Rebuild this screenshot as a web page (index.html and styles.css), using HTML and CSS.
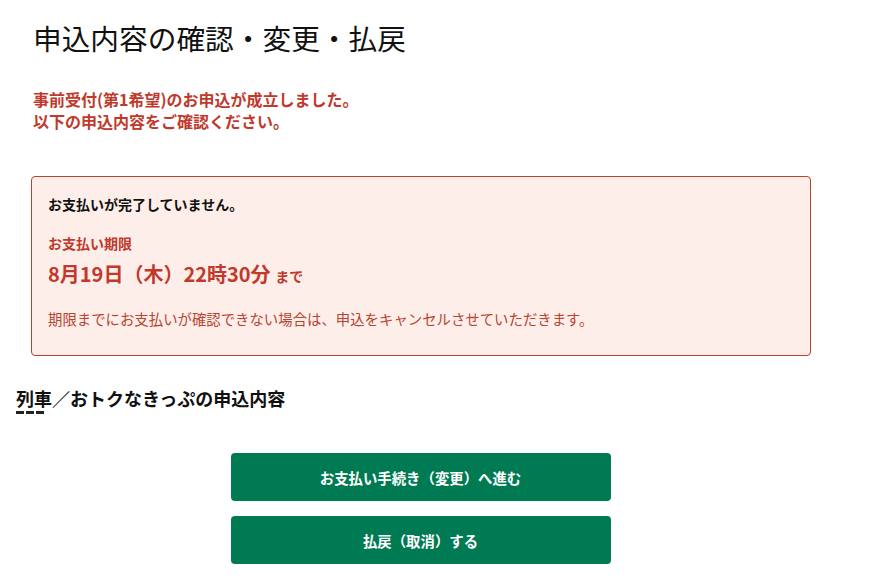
FILE: index.html
```html
<!DOCTYPE html>
<html lang="ja">
<head>
    <meta charset="UTF-8">
    <meta name="viewport" content="width=device-width, initial-scale=1.0">
    <title>申込内容の確認・変更・払戻</title>
    <link rel="stylesheet" href="styles.css">
</head>
<body>

<div class="page">
    <h1 class="page-title">申込内容の確認・変更・払戻</h1>

    <p class="lead">事前受付(第1希望)のお申込が成立しました。<br>以下の申込内容をご確認ください。</p>

    <div class="notice">
        <p class="notice-head">お支払いが完了していません。</p>
        <p class="notice-label">お支払い期限</p>
        <p class="notice-date">8月19日（木）22時30分 <span class="until">まで</span></p>
        <p class="notice-text">期限までにお支払いが確認できない場合は、申込をキャンセルさせていただきます。</p>
    </div>
</div>

<h2 class="section-title">列車／おトクなきっぷの申込内容</h2>

<div class="actions">
    <button class="btn">お支払い手続き（変更）へ進む</button>
    <button class="btn">払戻（取消）する</button>
</div>

</body>
</html>
```

FILE: styles.css
```css
body {
    font-family: "Noto Sans CJK JP", "Noto Sans", sans-serif;
    background-color: #fff;
    color: #111;
    margin: 0;
}
p {
    margin: 0;
}
.page {
    padding: 18px 62px 0 31px;
}
.page-title {
    font-size: 28.7px;
    font-weight: normal;
    line-height: 40px;
    margin: 0 0 0 2px;
}
.lead {
    color: #c0392b;
    font-size: 16px;
    font-weight: bold;
    line-height: 22px;
    margin: 30px 0 0 2px;
}
.notice {
    background-color: #fdeeea;
    border: 1px solid #b8442f;
    border-radius: 4px;
    margin-top: 44px;
    padding: 17px 16px 0;
    height: 161px;
}
.notice-head {
    font-size: 14px;
    font-weight: bold;
    line-height: 20px;
}
.notice-label {
    color: #c0392b;
    font-size: 14px;
    font-weight: bold;
    line-height: 20px;
    margin-top: 19px;
}
.notice-date {
    color: #c0392b;
    font-size: 20px;
    font-weight: bold;
    line-height: 28px;
    margin-top: 7px;
}
.notice-date .until {
    font-size: 14px;
}
.notice-text {
    color: #b8442f;
    font-size: 14.4px;
    line-height: 22px;
    margin-top: 18px;
}
.section-title {
    font-size: 18px;
    font-weight: bold;
    line-height: 26px;
    margin: 29px 0 0 16px;
    position: relative;
    padding-bottom: 6px;
}
.section-title::after {
    content: '';
    position: absolute;
    left: 0;
    bottom: 3px;
    width: 28px;
    height: 3px;
    background: repeating-linear-gradient(90deg, #222 0, #222 8px, transparent 8px, transparent 10px);
}
.actions {
    display: flex;
    flex-direction: column;
    align-items: center;
    gap: 15px;
    margin-top: 36px;
    padding-right: 32px;
}
.btn {
    width: 380px;
    height: 48px;
    background-color: #007a52;
    color: #fff;
    border: none;
    border-radius: 4px;
    font-family: inherit;
    font-size: 14.4px;
    font-weight: bold;
    cursor: pointer;
}
.btn:hover {
    background-color: #006644;
}
```
